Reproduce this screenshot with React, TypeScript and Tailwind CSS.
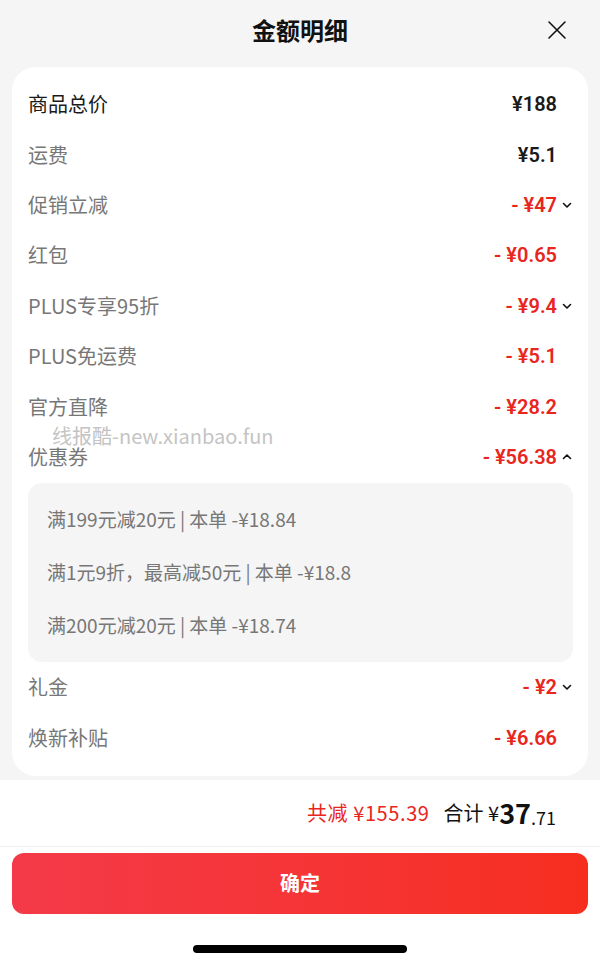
import React from 'react';

type Row = { label: string; value: string; red?: boolean; dark?: boolean; chevron?: 'down' | 'up' };

const topRows: Row[] = [
  { label: '商品总价', value: '¥188', dark: true },
  { label: '运费', value: '¥5.1' },
  { label: '促销立减', value: '- ¥47', red: true, chevron: 'down' },
  { label: '红包', value: '- ¥0.65', red: true },
  { label: 'PLUS专享95折', value: '- ¥9.4', red: true, chevron: 'down' },
  { label: 'PLUS免运费', value: '- ¥5.1', red: true },
  { label: '官方直降', value: '- ¥28.2', red: true },
  { label: '优惠券', value: '- ¥56.38', red: true, chevron: 'up' },
];

const bottomRows: Row[] = [
  { label: '礼金', value: '- ¥2', red: true, chevron: 'down' },
  { label: '焕新补贴', value: '- ¥6.66', red: true },
];

const coupons = [
  '满199元减20元 | 本单 -¥18.84',
  '满1元9折，最高减50元 | 本单 -¥18.8',
  '满200元减20元 | 本单 -¥18.74',
];

const Chevron: React.FC<{ dir: 'down' | 'up' }> = ({ dir }) => (
  <svg viewBox="0 0 12 12" className="w-[12px] h-[12px]" fill="none" stroke="#111" strokeWidth={1.6} strokeLinecap="round" strokeLinejoin="round">
    {dir === 'down' ? <path d="M2.5 4.5 6 8l3.5-3.5" /> : <path d="M2.5 7.5 6 4l3.5 3.5" />}
  </svg>
);

const DetailRow: React.FC<{ row: Row }> = ({ row }) => (
  <div className="h-[50.4px] flex items-center justify-between">
    <span className={`text-[20px] ${row.dark ? 'text-[#1a1a1a]' : 'text-[#777]'}`}>{row.label}</span>
    <div className="flex items-center">
      <span
        className={`text-[20px] font-semibold font-[Roboto,'Noto_Sans_CJK_SC',sans-serif] ${row.red ? 'text-[#e8261d]' : 'text-[#1a1a1a]'}`}
      >
        {row.value}
      </span>
      <span className="w-[16px] flex justify-end">{row.chevron && <Chevron dir={row.chevron} />}</span>
    </div>
  </div>
);

export default function App() {
  return (
    <div className="w-[600px] h-[966px] bg-white relative overflow-hidden font-['Noto_Sans_CJK_SC','Noto_Sans',sans-serif]">
      <div className="bg-[#f5f5f5] pb-[4px]">
        <div className="h-[60px] relative flex items-center justify-center">
          <h1 className="text-[24px] font-semibold text-[#111]">金额明细</h1>
          <svg viewBox="0 0 20 20" className="absolute right-[33px] top-[20px] w-[20px] h-[20px]" fill="none" stroke="#111" strokeWidth={1.6} strokeLinecap="round">
            <path d="M2 2l16 16M18 2 2 18" />
          </svg>
        </div>
        <div className="mx-[12px] mt-[7px] bg-white rounded-[24px] pt-[12px] pb-[13px] pl-[16px] pr-[15px]">
          {topRows.map((r) => (
            <DetailRow key={r.label} row={r} />
          ))}
          <div className="bg-[#f5f5f5] rounded-[14px] mt-[1px] py-[10px] pl-[19px]">
            {coupons.map((c) => (
              <div key={c} className="h-[53px] flex items-center text-[19px] text-[#777]">
                {c}
              </div>
            ))}
          </div>
          {bottomRows.map((r) => (
            <DetailRow key={r.label} row={r} />
          ))}
        </div>
      </div>

      <div className="h-[67px] flex items-center justify-end pr-[44px] border-b border-[#eeeeee]">
        <span className="text-[20px] text-[#e8261d] tracking-[0.6px]">共减 ¥155.39</span>
        <span className="ml-[14px] text-[20px] text-[#111]">合计 ¥</span>
        <span className="text-[27px] font-bold text-[#111] leading-none">37</span>
        <span className="text-[18px] text-[#111] self-end mb-[20px] leading-none">.71</span>
      </div>

      <div className="px-[12px] pt-[6px]">
        <button className="w-full h-[61px] rounded-[12px] bg-gradient-to-r from-[#f43a48] to-[#f62e1e] text-white text-[20px] font-bold">
          确定
        </button>
      </div>

      <div className="flex justify-center pt-[31px]">
        <div className="w-[214px] h-[8px] rounded-full bg-black" />
      </div>

      <div className="absolute left-[52px] top-[421px] text-[20px] text-[#c4c4c4] pointer-events-none">
        线报酷-new.xianbao.fun
      </div>
    </div>
  );
}
